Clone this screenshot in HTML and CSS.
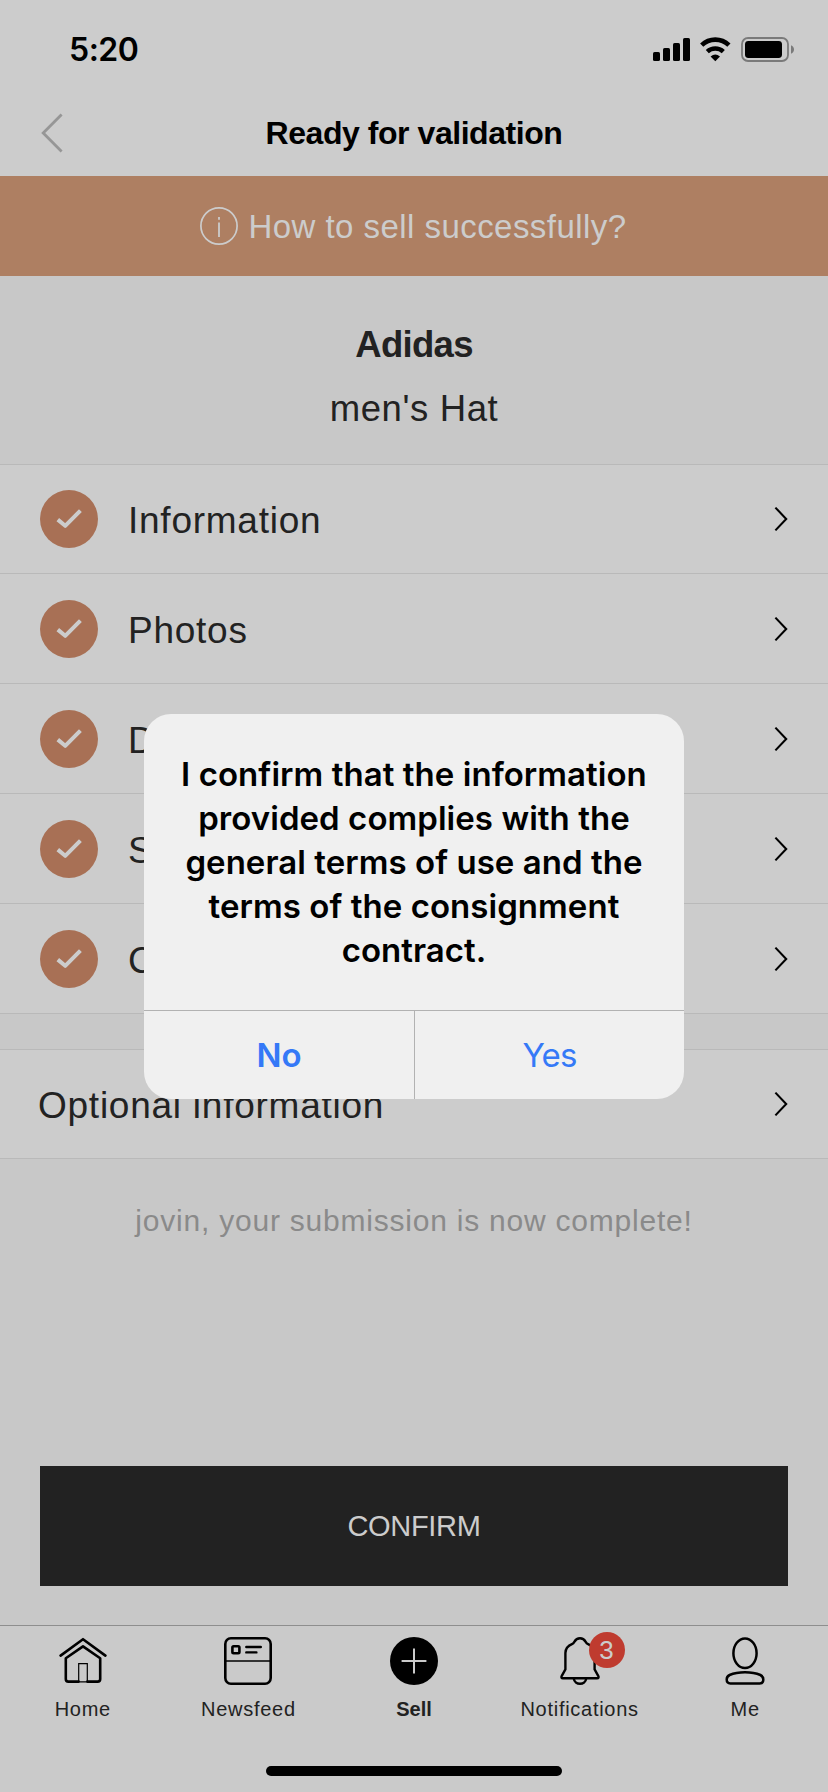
FILE: index.html
```html
<!DOCTYPE html>
<html lang="en">
<head>
<meta charset="utf-8">
<title>Ready for validation</title>
<link rel="stylesheet" href="styles.css">
</head>
<body>
<svg class="defs" width="0" height="0" aria-hidden="true">
  <symbol id="check" viewBox="0 0 58 58"><path d="M17.8 29.6 L25.2 35.8 L40.4 20.6" fill="none" stroke="#cccccc" stroke-width="4" stroke-linejoin="round"/></symbol>
  <symbol id="next" viewBox="0 0 14 26"><path d="M1.4 1.6 L12.2 13 L1.4 24.4" fill="none" stroke="#000" stroke-width="2.1"/></symbol>
</svg>
<div class="screen">
  <header class="status">
    <span class="time">5:20</span>
    <svg class="status-icons" width="142" height="25" viewBox="0 0 142 25">
      <rect x="0" y="15" width="7" height="9" rx="1.6"/>
      <rect x="10" y="11" width="7" height="13" rx="1.6"/>
      <rect x="20" y="6" width="7" height="18" rx="1.6"/>
      <rect x="30" y="1" width="7" height="23" rx="1.6"/>
      <path d="M48.7 8.2 A19.5 19.5 0 0 1 75.9 8.2 M54.3 14.6 A12 12 0 0 1 70.3 14.6" fill="none" stroke="#000" stroke-width="4.6"/>
      <path d="M57.6 19.6 Q62.3 15.6 67 19.6 L62.3 24.2 Z"/>
      <rect x="89" y="1" width="46" height="23" rx="6" fill="none" stroke="#7a7a7a" stroke-width="1.8"/>
      <rect x="92" y="4" width="37" height="17" rx="3.4"/>
      <path d="M138 8.2 Q141 9.6 141 12.5 Q141 15.4 138 16.8 Z" fill="#7a7a7a"/>
    </svg>
  </header>
  <nav class="nav">
    <svg class="back" width="24" height="40" viewBox="0 0 24 40"><path d="M21.6 1.6 L3.2 20 L21.6 38.4" fill="none" stroke="#969696" stroke-width="2.8"/></svg>
    <h1 class="title">Ready for validation</h1>
  </nav>
  <div class="banner">
    <svg width="38" height="38" viewBox="0 0 38 38"><circle cx="19" cy="19" r="18.1" fill="none" stroke="#cccccc" stroke-width="1.7"/><path d="M19 15.5 V30 M19 10 V12.8" stroke="#cccccc" stroke-width="1.8"/></svg>
    <span class="banner-text">How to sell successfully?</span>
  </div>
  <section class="product">
    <div class="brand">Adidas</div>
    <div class="kind">men's Hat</div>
  </section>
  <section class="steps">
    <div class="row"><svg class="check" viewBox="0 0 58 58"><use href="#check"/></svg><span class="label">Information</span><svg class="next"><use href="#next"/></svg></div>
    <div class="row"><svg class="check" viewBox="0 0 58 58"><use href="#check"/></svg><span class="label">Photos</span><svg class="next"><use href="#next"/></svg></div>
    <div class="row"><svg class="check" viewBox="0 0 58 58"><use href="#check"/></svg><span class="label">Description</span><svg class="next"><use href="#next"/></svg></div>
    <div class="row"><svg class="check" viewBox="0 0 58 58"><use href="#check"/></svg><span class="label">Selling price</span><svg class="next"><use href="#next"/></svg></div>
    <div class="row"><svg class="check" viewBox="0 0 58 58"><use href="#check"/></svg><span class="label">Contact</span><svg class="next"><use href="#next"/></svg></div>
  </section>
  <section class="optional">
    <span class="optional-label">Optional information</span>
    <svg class="next"><use href="#next"/></svg>
  </section>
  <section class="finish">
    <p class="note">jovin, your submission is now complete!</p>
    <button class="confirm">CONFIRM</button>
  </section>
  <footer class="tabs">
    <div class="tab">
      <svg class="icon" viewBox="0 0 48 48"><g fill="none" stroke="#000" stroke-width="2.6" stroke-linecap="round" stroke-linejoin="round"><path d="M1.6 18.6 L24 2.2 L46.4 18.6"/><path d="M19.6 44.6 H9.4 Q6.8 44.6 6.8 42 V21.3 L24 9.4 L41.2 21.3 V42 Q41.2 44.6 38.6 44.6 H28.4"/></g><path d="M19.7 44.8 V26.7 H28.3 V44.8 Z" fill="none" stroke="#000" stroke-width="1.2"/></svg>
      <span class="tab-label">Home</span>
    </div>
    <div class="tab">
      <svg class="icon" viewBox="0 0 48 48"><path d="M2 24 H46" stroke="#333" stroke-width="2"/><g fill="none" stroke="#000" stroke-width="2.6" stroke-linecap="round"><rect x="1.3" y="1.3" width="45.4" height="45.4" rx="5.6"/><rect x="8.4" y="9.2" width="7" height="7" rx="1.2"/><path d="M22.3 10 H36.8 M22.3 15.4 H32.4" stroke-width="2.4"/></g></svg>
      <span class="tab-label">Newsfeed</span>
    </div>
    <div class="tab">
      <svg class="icon" viewBox="0 0 48 48"><circle cx="24" cy="24" r="24"/><path d="M11.6 24 H36.4 M24 11.6 V36.4" stroke="#cbcbcb" stroke-width="2"/></svg>
      <span class="tab-label current">Sell</span>
    </div>
    <div class="tab">
      <div class="bell">
        <svg class="icon" viewBox="0 0 48 48"><g fill="none" stroke="#000" stroke-width="2.4" stroke-linejoin="round"><path d="M7 41.2 Q4.6 41.2 5.8 38.8 L9.4 32.4 V16 Q9.4 9.6 16.4 6.8 C18.8 6.2 18.2 1.3 24 1.3 C29.8 1.3 29.2 6.2 31.6 6.8 Q38.6 9.6 38.6 16 V32.4 L42.2 38.8 Q43.4 41.2 41 41.2 Z"/><path d="M17.8 41.6 C18.6 48.4 29.4 48.4 30.2 41.6"/></g></svg>
        <span class="badge">3</span>
      </div>
      <span class="tab-label">Notifications</span>
    </div>
    <div class="tab">
      <svg class="icon" viewBox="0 0 48 48"><g fill="none" stroke="#000" stroke-width="2.5"><ellipse cx="24" cy="16.2" rx="11.6" ry="14.8"/><path d="M9.4 46.5 H38.6 Q42.3 46.5 42.3 42.6 Q42.3 39.4 39.4 38 C31 34.3 17 34.3 8.6 38 Q5.7 39.4 5.7 42.6 Q5.7 46.5 9.4 46.5 Z"/></g></svg>
      <span class="tab-label">Me</span>
    </div>
  </footer>
  <div class="home-bar"></div>
  <div class="alert" role="alertdialog">
    <p class="message">I confirm that the information<br>provided complies with the<br>general terms of use and the<br>terms of the consignment<br>contract.</p>
    <div class="actions">
      <button class="action no">No</button>
      <button class="action yes">Yes</button>
    </div>
  </div>
</div>
</body>
</html>
```
FILE: styles.css
```css
* { box-sizing: border-box; }
body { margin: 0; font-family: "Liberation Sans", Arial, sans-serif; color: #222222; }
svg { display: block; flex: none; }
button { border: 0; padding: 0; background: none; font-family: inherit; }
.defs { position: absolute; }
.screen { position: relative; width: 828px; height: 1792px; overflow: hidden; background: #c8c8c8; display: flex; flex-direction: column; }

.status { height: 90px; padding: 9px 33px 0 69px; background: #cccccc; display: flex; align-items: center; justify-content: space-between; }
.time { font: 600 32px Inter, sans-serif; color: #000; letter-spacing: -0.5px; }
.nav { height: 86px; background: #cccccc; display: grid; grid-template-columns: 104px 1fr 104px; align-items: center; }
.back { margin-left: 40px; }
.title { margin: 0; padding-top: 1px; text-align: center; font-size: 32px; font-weight: 700; letter-spacing: -0.45px; color: #000; white-space: nowrap; }

.banner { height: 100px; background: #ae7f62; color: #cccccc; display: flex; align-items: center; justify-content: center; gap: 10px; padding-right: 1px; }
.banner-text { font-size: 33px; letter-spacing: 0.45px; padding-top: 1px; }

.product { height: 188px; padding-top: 37px; text-align: center; font-size: 36.5px; line-height: 64px; }
.brand { font-weight: 700; letter-spacing: -0.7px; }
.kind { letter-spacing: 0.6px; }

.steps { border-top: 1px solid #b9b9b9; }
.row { height: 110px; padding: 26px 40px 0 40px; border-bottom: 1px solid #b9b9b9; background: #cccccc; display: flex; }
.row:first-child { height: 109px; padding-top: 25px; }
.check { width: 58px; height: 58px; border-radius: 50%; background: #a87055; }
.label { flex: 1; margin-left: 30px; font-size: 37px; letter-spacing: 0.75px; line-height: 61px; }
.next { width: 14px; height: 26px; }
.row .next { margin-top: 16px; }

.optional { height: 110px; margin-top: 35px; padding: 0 40px 0 38px; border-top: 1px solid #b9b9b9; border-bottom: 1px solid #b9b9b9; background: #cccccc; display: flex; align-items: center; justify-content: space-between; }
.optional-label { padding-top: 3px; font-size: 37px; letter-spacing: 0.75px; }

.finish { flex: 1; padding: 42px 40px 39px; display: flex; flex-direction: column; justify-content: space-between; }
.note { margin: 0; text-align: center; font-size: 30px; line-height: 40px; letter-spacing: 0.78px; color: #8a8a8a; }
.confirm { height: 120px; background: #222222; color: #cccccc; font-size: 29px; letter-spacing: -0.3px; }

.tabs { height: 167px; border-top: 1px solid #8e8e8e; background: #cacaca; padding-top: 11px; display: grid; grid-template-columns: repeat(5, 1fr); align-items: start; }
.tab { display: flex; flex-direction: column; align-items: center; gap: 12px; }
.icon { width: 48px; height: 48px; }
.tab-label { font-size: 20px; line-height: 24px; letter-spacing: 0.72px; }
.current { font-weight: 700; letter-spacing: 0; }
.bell { position: relative; }
.badge { position: absolute; left: 33px; top: -5px; width: 36px; height: 36px; border-radius: 50%; background: #bf3b2f; color: #cccccc; font-size: 26px; line-height: 37px; text-align: center; }
.home-bar { position: absolute; left: 266px; top: 1766px; width: 296px; height: 10px; border-radius: 5px; background: #000; }

.alert { position: absolute; left: 144px; top: 714px; width: 540px; height: 385px; border-radius: 27px; overflow: hidden; background: #f0f0f0; color: #000; font-family: Inter, sans-serif; display: flex; flex-direction: column; }
.message { flex: 1; margin: 0; padding-top: 38px; text-align: center; font-size: 33px; font-weight: 600; line-height: 44px; letter-spacing: 0.05px; white-space: nowrap; }
.actions { height: 89px; border-top: 1px solid #b2b2b2; display: grid; grid-template-columns: 1fr 1fr; }
.action { color: #3579f7; font-size: 33px; }
.no { font-weight: 600; }
.yes { font-weight: 400; letter-spacing: -0.8px; border-left: 1px solid #b2b2b2; }
```
